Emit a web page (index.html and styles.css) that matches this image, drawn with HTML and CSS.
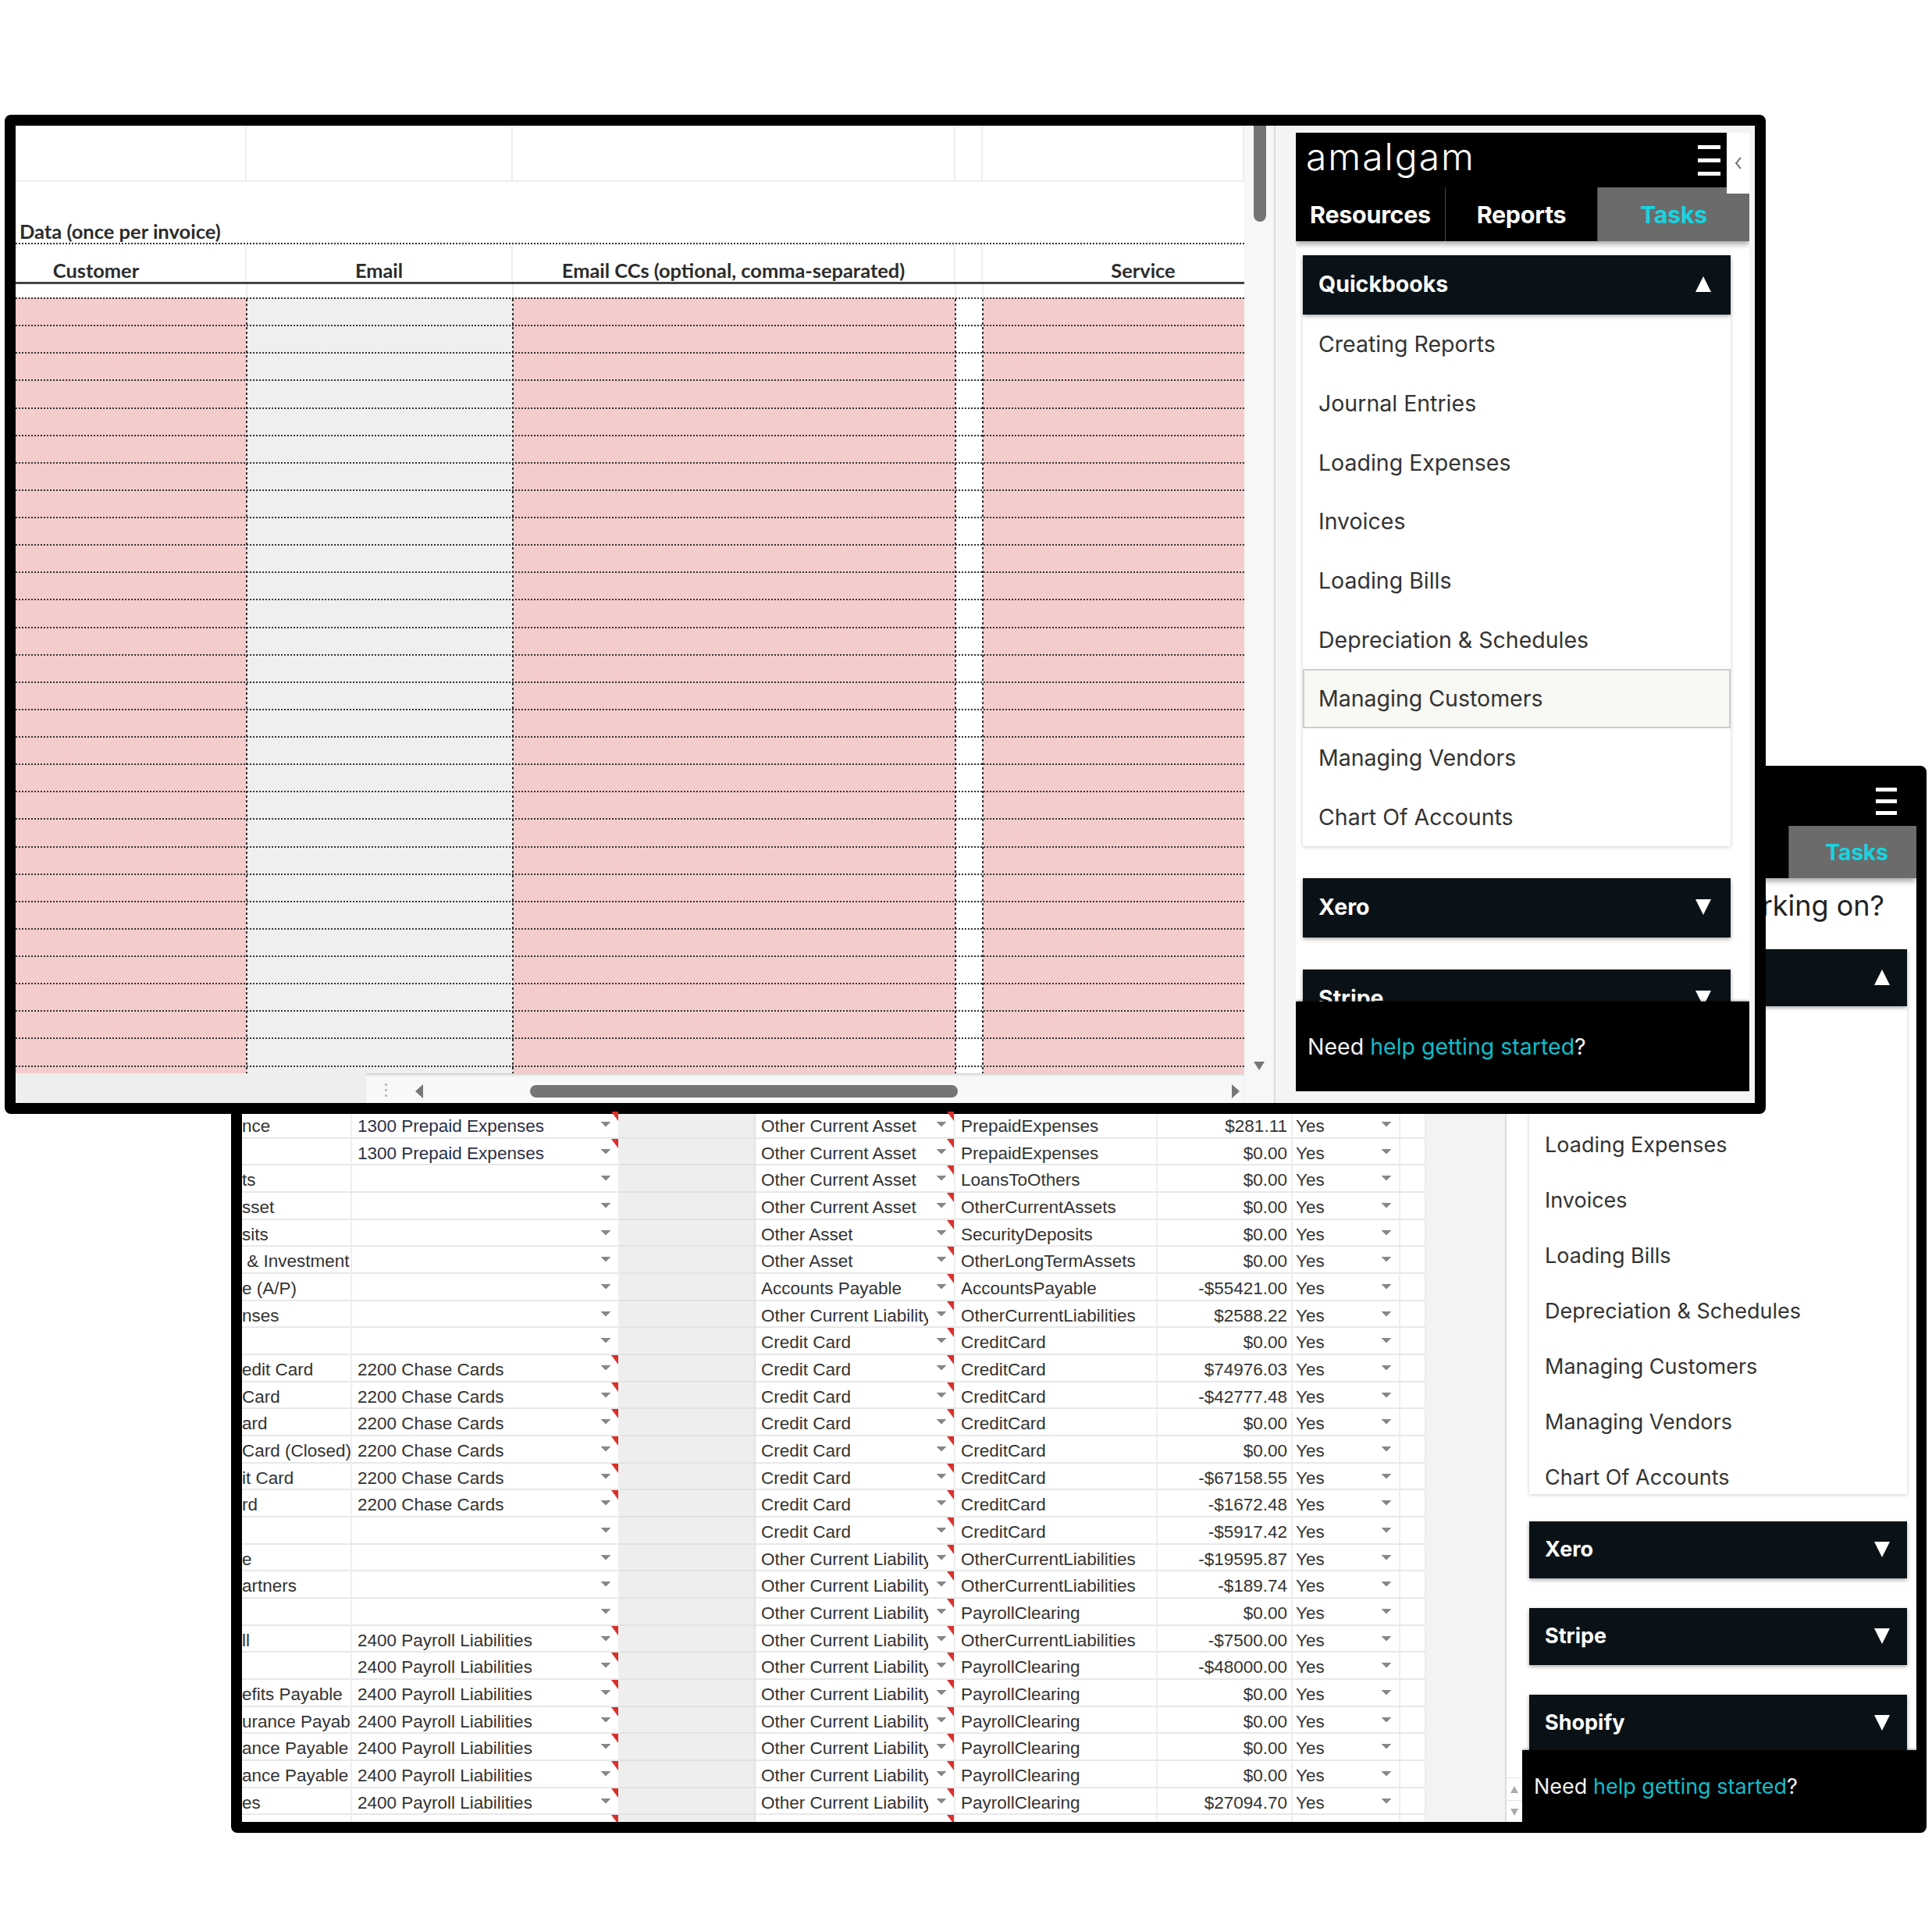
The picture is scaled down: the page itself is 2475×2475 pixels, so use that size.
FILE: index.html
```html
<!DOCTYPE html>
<html lang="en">
<head>
  <meta charset="UTF-8">
  <title>Amalgam sheets</title>
  <link rel="stylesheet" href="styles.css">
</head>
<body>
<div class="desk">

  <!-- window behind -->
  <div class="win win-back">
    <div class="ledger-wrap">
      <div class="ledger">
        <span>nce</span><span class="note dd blue">1300 Prepaid Expenses</span><span class="gr"></span><span class="note dd">Other Current Asset</span><span>PrepaidExpenses</span><span class="amt">$281.11</span><span class="dd">Yes</span><span></span>
        <span></span><span class="note dd blue">1300 Prepaid Expenses</span><span class="gr"></span><span class="note dd">Other Current Asset</span><span>PrepaidExpenses</span><span class="amt">$0.00</span><span class="dd">Yes</span><span></span>
        <span>ts</span><span class="dd"></span><span class="gr"></span><span class="note dd">Other Current Asset</span><span>LoansToOthers</span><span class="amt">$0.00</span><span class="dd">Yes</span><span></span>
        <span>sset</span><span class="dd"></span><span class="gr"></span><span class="note dd">Other Current Asset</span><span>OtherCurrentAssets</span><span class="amt">$0.00</span><span class="dd">Yes</span><span></span>
        <span>sits</span><span class="dd"></span><span class="gr"></span><span class="note dd">Other Asset</span><span>SecurityDeposits</span><span class="amt">$0.00</span><span class="dd">Yes</span><span></span>
        <span>&nbsp;&amp; Investment</span><span class="dd"></span><span class="gr"></span><span class="note dd">Other Asset</span><span>OtherLongTermAssets</span><span class="amt">$0.00</span><span class="dd">Yes</span><span></span>
        <span>e (A/P)</span><span class="dd"></span><span class="gr"></span><span class="note dd">Accounts Payable</span><span>AccountsPayable</span><span class="amt">-$55421.00</span><span class="dd">Yes</span><span></span>
        <span>nses</span><span class="dd"></span><span class="gr"></span><span class="note dd">Other Current Liability</span><span>OtherCurrentLiabilities</span><span class="amt">$2588.22</span><span class="dd">Yes</span><span></span>
        <span></span><span class="dd"></span><span class="gr"></span><span class="note dd">Credit Card</span><span>CreditCard</span><span class="amt">$0.00</span><span class="dd">Yes</span><span></span>
        <span>edit Card</span><span class="note dd">2200 Chase Cards</span><span class="gr"></span><span class="note dd">Credit Card</span><span>CreditCard</span><span class="amt">$74976.03</span><span class="dd">Yes</span><span></span>
        <span>Card</span><span class="note dd">2200 Chase Cards</span><span class="gr"></span><span class="note dd">Credit Card</span><span>CreditCard</span><span class="amt">-$42777.48</span><span class="dd">Yes</span><span></span>
        <span>ard</span><span class="note dd">2200 Chase Cards</span><span class="gr"></span><span class="note dd">Credit Card</span><span>CreditCard</span><span class="amt">$0.00</span><span class="dd">Yes</span><span></span>
        <span>Card (Closed)</span><span class="note dd">2200 Chase Cards</span><span class="gr"></span><span class="note dd">Credit Card</span><span>CreditCard</span><span class="amt">$0.00</span><span class="dd">Yes</span><span></span>
        <span>it Card</span><span class="note dd">2200 Chase Cards</span><span class="gr"></span><span class="note dd">Credit Card</span><span>CreditCard</span><span class="amt">-$67158.55</span><span class="dd">Yes</span><span></span>
        <span>rd</span><span class="note dd">2200 Chase Cards</span><span class="gr"></span><span class="note dd">Credit Card</span><span>CreditCard</span><span class="amt">-$1672.48</span><span class="dd">Yes</span><span></span>
        <span></span><span class="dd"></span><span class="gr"></span><span class="note dd">Credit Card</span><span>CreditCard</span><span class="amt">-$5917.42</span><span class="dd">Yes</span><span></span>
        <span>e</span><span class="dd"></span><span class="gr"></span><span class="note dd">Other Current Liability</span><span>OtherCurrentLiabilities</span><span class="amt">-$19595.87</span><span class="dd">Yes</span><span></span>
        <span>artners</span><span class="dd"></span><span class="gr"></span><span class="note dd">Other Current Liability</span><span>OtherCurrentLiabilities</span><span class="amt">-$189.74</span><span class="dd">Yes</span><span></span>
        <span></span><span class="dd"></span><span class="gr"></span><span class="note dd">Other Current Liability</span><span>PayrollClearing</span><span class="amt">$0.00</span><span class="dd">Yes</span><span></span>
        <span>ll</span><span class="note dd">2400 Payroll Liabilities</span><span class="gr"></span><span class="note dd">Other Current Liability</span><span>OtherCurrentLiabilities</span><span class="amt">-$7500.00</span><span class="dd">Yes</span><span></span>
        <span></span><span class="note dd">2400 Payroll Liabilities</span><span class="gr"></span><span class="note dd">Other Current Liability</span><span>PayrollClearing</span><span class="amt">-$48000.00</span><span class="dd">Yes</span><span></span>
        <span>efits Payable</span><span class="note dd">2400 Payroll Liabilities</span><span class="gr"></span><span class="note dd">Other Current Liability</span><span>PayrollClearing</span><span class="amt">$0.00</span><span class="dd">Yes</span><span></span>
        <span>urance Payabl</span><span class="note dd">2400 Payroll Liabilities</span><span class="gr"></span><span class="note dd">Other Current Liability</span><span>PayrollClearing</span><span class="amt">$0.00</span><span class="dd">Yes</span><span></span>
        <span>ance Payable</span><span class="note dd">2400 Payroll Liabilities</span><span class="gr"></span><span class="note dd">Other Current Liability</span><span>PayrollClearing</span><span class="amt">$0.00</span><span class="dd">Yes</span><span></span>
        <span>ance Payable</span><span class="note dd">2400 Payroll Liabilities</span><span class="gr"></span><span class="note dd">Other Current Liability</span><span>PayrollClearing</span><span class="amt">$0.00</span><span class="dd">Yes</span><span></span>
        <span>es</span><span class="note dd">2400 Payroll Liabilities</span><span class="gr"></span><span class="note dd">Other Current Liability</span><span>PayrollClearing</span><span class="amt">$27094.70</span><span class="dd">Yes</span><span></span>
        <span></span><span class="note"></span><span class="gr"></span><span class="note"></span><span></span><span></span><span></span><span></span>
      </div>
      <div class="ledger-grey"></div>
      <div class="ledger-scroll">
        <div class="step"><i class="caret up small"></i></div>
        <div class="step"><i class="caret down small"></i></div>
      </div>
    </div>

    <div class="pane pane-back">
      <div class="brand-bar">
        <div class="burger"><i></i><i></i><i></i></div>
      </div>
      <div class="tabs">
        <div class="tab">Resources</div>
        <div class="tab">Reports</div>
        <div class="tab on">Tasks</div>
      </div>
      <div class="pane-body">
        <div class="ask">What are you working on?</div>
        <div class="bar open">Quickbooks <i class="caret up"></i></div>
        <div class="menu">
          <div class="item">Creating Reports</div>
          <div class="item">Journal Entries</div>
          <div class="item">Loading Expenses</div>
          <div class="item">Invoices</div>
          <div class="item">Loading Bills</div>
          <div class="item">Depreciation &amp; Schedules</div>
          <div class="item">Managing Customers</div>
          <div class="item">Managing Vendors</div>
          <div class="item">Chart Of Accounts</div>
        </div>
        <div class="bar">Xero <i class="caret down"></i></div>
        <div class="bar">Stripe <i class="caret down"></i></div>
        <div class="bar">Shopify <i class="caret down"></i></div>
      </div>
      <div class="help">Need <a>help getting started</a>?</div>
    </div>
  </div>

  <!-- window in front -->
  <div class="win win-front">
    <div class="sheet">
      <div class="cols top-cells"><div></div><div></div><div></div><div></div><div></div></div>
      <div class="title-row">Data (once per invoice)</div>
      <div class="cols head-cells">
        <div class="h-customer">Customer</div>
        <div>Email</div>
        <div>Email CCs (optional, comma-separated)</div>
        <div></div>
        <div class="h-service">Service</div>
      </div>
      <div class="gap-cells"></div>
      <div class="band">
        <div class="line"></div><div class="line"></div><div class="line"></div><div class="line"></div>
        <div class="line"></div><div class="line"></div><div class="line"></div><div class="line"></div>
        <div class="line"></div><div class="line"></div><div class="line"></div><div class="line"></div>
        <div class="line"></div><div class="line"></div><div class="line"></div><div class="line"></div>
        <div class="line"></div><div class="line"></div><div class="line"></div><div class="line"></div>
        <div class="line"></div><div class="line"></div><div class="line"></div><div class="line"></div>
        <div class="line"></div><div class="line"></div><div class="line"></div><div class="line"></div>
      </div>
      <div class="hscroll">
        <div class="hscroll-blank"></div>
        <div class="grip"></div>
        <i class="caret left"></i>
        <div class="thumb"></div>
        <i class="caret right"></i>
      </div>
    </div>
    <div class="vscroll">
      <div class="vthumb"></div>
      <i class="caret down grey"></i>
    </div>

    <div class="side">
      <div class="pane pane-front">
        <div class="brand-bar">
          <div class="brand">amalgam</div>
          <div class="burger"><i></i><i></i><i></i></div>
          <div class="collapse">
            <svg width="10" height="18" viewBox="0 0 10 18"><path d="M8 2 2 9l6 7" fill="none" stroke="#777" stroke-width="2"/></svg>
          </div>
        </div>
        <div class="tabs">
          <div class="tab">Resources</div>
          <div class="tab">Reports</div>
          <div class="tab on">Tasks</div>
        </div>
        <div class="pane-body">
          <div class="bar open">Quickbooks <i class="caret up"></i></div>
          <div class="menu">
            <div class="item">Creating Reports</div>
            <div class="item">Journal Entries</div>
            <div class="item">Loading Expenses</div>
            <div class="item">Invoices</div>
            <div class="item">Loading Bills</div>
            <div class="item">Depreciation &amp; Schedules</div>
            <div class="item active">Managing Customers</div>
            <div class="item">Managing Vendors</div>
            <div class="item">Chart Of Accounts</div>
          </div>
          <div class="bar">Xero <i class="caret down"></i></div>
          <div class="bar">Stripe <i class="caret down"></i></div>
        </div>
        <div class="help">Need <a>help getting started</a>?</div>
      </div>
    </div>
  </div>

</div>
</body>
</html>
```

FILE: styles.css
```css
html, body { margin: 0; background: #fff; }
.desk { position: relative; width: 2475px; height: 2475px; overflow: hidden; }

.win { position: absolute; display: flex; box-sizing: border-box; border: 14px solid #000; border-radius: 8px; background: #000; overflow: hidden; }
.win-front { left: 6px; top: 147px; width: 2256px; height: 1280px; }
.win-back { left: 296px; top: 981px; width: 2172px; height: 1367px; border-right-width: 13px; }

/* carets */
.caret { display: block; width: 0; height: 0; border-style: solid; border-color: transparent; }
.caret.up { border-width: 0 10px 20px; border-bottom-color: #fff; }
.caret.down { border-width: 20px 10px 0; border-top-color: #fff; }
.caret.left { border-width: 9px 10px 9px 0; border-right-color: #777; }
.caret.right { border-width: 9px 0 9px 10px; border-left-color: #777; }
.caret.down.grey { border-width: 11px 7px 0; border-top-color: #777; }
.caret.small.up { border-width: 0 5px 9px; border-bottom-color: #aaa; }
.caret.small.down { border-width: 9px 5px 0; border-top-color: #aaa; }

/* front sheet */
.sheet { width: 1574px; display: flex; flex-direction: column; background: #fff; font-family: "Lato", sans-serif; font-weight: 700; color: #2c2c2c; }
.cols { display: grid; grid-template-columns: 296px 341px 567px 35px 335px; }
.top-cells { height: 72px; border-bottom: 2px solid #eee; box-sizing: border-box; }
.top-cells div { border-right: 2px solid #eee; }
.title-row { height: 80px; box-sizing: border-box; padding: 47px 0 0 5px; line-height: 32px; font-size: 25.5px; border-bottom: 2px dotted #333; white-space: nowrap; }
.head-cells { height: 51px; box-sizing: border-box; border-bottom: 3px solid #444; line-height: 66px; font-size: 25.4px; text-align: center; white-space: nowrap; }
.head-cells div { border-right: 2px solid #eee; box-sizing: border-box; height: 48px; }
.h-customer { padding-right: 88px; }
.h-service { padding-left: 76px; border-right: 0 !important; }
.gap-cells { height: 17px; background: linear-gradient(90deg, #eee 0 2px, transparent 2px) 295px 0 / 2px 100% no-repeat, linear-gradient(90deg, #eee 0 2px, transparent 2px) 636px 0 / 2px 100% no-repeat, linear-gradient(90deg, #eee 0 2px, transparent 2px) 1203px 0 / 2px 100% no-repeat, linear-gradient(90deg, #eee 0 2px, transparent 2px) 1238px 0 / 2px 100% no-repeat; }
.band {
  flex: 1; overflow: hidden; border-top: 2px dotted #333;
  background:
    repeating-linear-gradient(180deg, #333 0 3px, transparent 3px 6px) 295px 0 / 2px 100% no-repeat,
    repeating-linear-gradient(180deg, #333 0 3px, transparent 3px 6px) 636px 0 / 2px 100% no-repeat,
    repeating-linear-gradient(180deg, #333 0 3px, transparent 3px 6px) 1203px 0 / 2px 100% no-repeat,
    repeating-linear-gradient(180deg, #333 0 3px, transparent 3px 6px) 1238px 0 / 2px 100% no-repeat,
    linear-gradient(90deg, #f4cccc 296px, #efefef 296px 637px, #f4cccc 637px 1204px, #fff 1204px 1239px, #f4cccc 1239px);
}
.line { height: 35.14px; box-sizing: border-box; border-bottom: 2px dotted #333; }
.hscroll { height: 38px; flex: none; box-sizing: border-box; display: flex; align-items: center; padding-top: 8px; background: #f8f8f8; box-shadow: inset 0 3px 4px -2px #bbb; }
.hscroll-blank { width: 449px; height: 38px; margin-top: -8px; background: #eee; }
.grip { width: 3px; height: 20px; margin: 0 36px 0 24px; background: repeating-linear-gradient(180deg, #bbb 0 3px, transparent 3px 7px); }
.thumb { width: 548px; height: 16px; margin: 0 351px 0 137px; border-radius: 8px; background: #757575; }

.vscroll { width: 40px; flex: none; box-sizing: border-box; position: relative; background: #f7f7f7; border-right: 2px solid #ddd; }
.vthumb { width: 16px; height: 123px; margin-left: 12px; border-radius: 0 0 8px 8px; background: #757575; }
.vscroll .caret { position: absolute; left: 12px; top: 1199px; }

/* side pane */
.side { flex: 1; background: #f4f4f4; padding: 9px 0 0 26px; }
.pane { display: flex; flex-direction: column; font-family: "Inter", sans-serif; background: #fff; overflow: hidden; }
.pane-front { width: 581px; height: 1228px; font-size: 28.5px; }
.pane-back { width: 505px; height: 1340px; font-size: 27px; }

.brand-bar { position: relative; flex: none; background: #000; color: #fff; display: flex; align-items: center; }
.pane-front .brand-bar { height: 70px; margin-right: 29px; padding: 0 8px 0 13px; }
.pane-back .brand-bar { height: 63px; justify-content: flex-end; padding-right: 25px; }
.brand { flex: 1; font-size: 48px; font-weight: 300; letter-spacing: 2px; line-height: 56px; padding-bottom: 8px; }
.burger { width: 29px; }
.burger i { display: block; height: 5px; background: #fff; margin: 12px 0; }
.pane-back .burger { width: 27px; }
.pane-back .burger i { margin: 10px 0; }
.collapse { position: absolute; left: 100%; top: 0; width: 29px; height: 78px; background: #fff; display: flex; align-items: center; justify-content: center; z-index: 1; }

.tabs { flex: none; display: grid; background: #000; color: #fff; font-weight: 700; letter-spacing: -0.3px; position: relative; box-shadow: 0 4px 7px rgba(0,0,0,.35); }
.pane-front .tabs { height: 69px; grid-template-columns: 192px 195px 194px; font-size: 30.5px; }
.pane-back .tabs { height: 67px; grid-template-columns: 171px 171px 163px; font-size: 28.5px; }
.tab { display: flex; align-items: center; justify-content: center; border-right: 1px solid #444; }
.tab.on { background: #6b6b6b; color: #16d4e0; border: 0; }
.pane-back .tab.on { padding-left: 10px; }

.pane-body { flex: 1; min-height: 0; overflow: hidden; }
.pane-front .pane-body { padding: 18px 24px 0 9px; }
.pane-back .pane-body { padding: 0 12px 0 9px; }
.ask { height: 91px; line-height: 70px; font-size: 36px; text-align: right; padding-right: 29px; color: #222; white-space: nowrap; }

.bar { display: flex; justify-content: space-between; align-items: center; box-sizing: border-box; background: #0b1217; color: #fff; font-weight: 700; box-shadow: 0 2px 5px rgba(0,0,0,.35); }
.pane-front .bar { height: 76px; padding: 0 25px 3px 20px; margin-bottom: 41px; }
.pane-back .bar { height: 73px; padding: 0 22px 2px 20px; margin-bottom: 38px; }
.bar.open { margin-bottom: 0 !important; }

.menu { box-shadow: 0 1px 5px rgba(0,0,0,.2); margin-bottom: 41px; }
.pane-back .menu { height: 625px; margin-bottom: 35px; }
.item { box-sizing: border-box; display: flex; align-items: center; padding-left: 20px; color: #333; }
.pane-front .item { height: 75.7px; }
.pane-back .item { height: 71px; }
.item.active { background: #f8f8f4; border: 2px solid #ccc; padding-left: 18px; }

.help { flex: none; background: #000; color: #f2f2f2; display: flex; align-items: center; box-shadow: 0 -1px 3px rgba(0,0,0,.4); position: relative; white-space: pre; }
.pane-front .help { height: 115px; padding-left: 15px; }
.pane-back .help { height: 93px; padding-left: 15px; }
.help a { color: #12bcc9; }

/* ledger behind */
.ledger-wrap { width: 1640px; flex: none; display: flex; align-items: flex-end; background: #fff; position: relative; }
.ledger {
  width: 1517px; flex: none; display: grid; margin-bottom: -26px;
  grid-template-columns: 141px 343px 174px 256px 259px 173px 138px 33px; grid-auto-rows: 34.68px;
  font-family: "Liberation Sans", Arial, sans-serif; font-size: 22.5px; color: #333;
}
.ledger span { position: relative; display: block; box-sizing: border-box; padding-left: 7px; line-height: 38px; white-space: nowrap; overflow: hidden; border-right: 2px solid #eee; border-bottom: 2px solid #e8e8e8; }
.ledger span:nth-child(8n+1) { padding-left: 0; }
.ledger span:nth-child(8n+7) { padding-left: 4px; }
.ledger span.gr { background: #eee; border-bottom-color: #e2e2e2; border-right-color: #e2e2e2; }
.ledger .blue { color: #2b3047; }
.ledger .amt { text-align: right; padding-right: 5px; }
.ledger .dd::after {
  content: ""; position: absolute; right: 0; top: 0; bottom: 0; width: 33px;
  background:
    linear-gradient(to top right, transparent 50%, #888 50%) 11px 13px / 6px 7px no-repeat,
    linear-gradient(to top left, transparent 50%, #888 50%) 17px 13px / 6px 7px no-repeat,
    #fff;
}
.ledger .note::before { content: ""; position: absolute; z-index: 1; right: 0; top: 0; border-style: solid; border-width: 0 9px 12px 0; border-color: transparent #d9302c transparent transparent; }
.ledger-grey { width: 103px; height: 100%; flex: none; background: #f3f3f3; border-right: 2px solid #ddd; box-sizing: border-box; }
.ledger-scroll { width: 20px; height: 57px; flex: none; }
.step { height: 28px; display: flex; align-items: center; justify-content: center; border-top: 1px solid #e4e4e4; }
```
